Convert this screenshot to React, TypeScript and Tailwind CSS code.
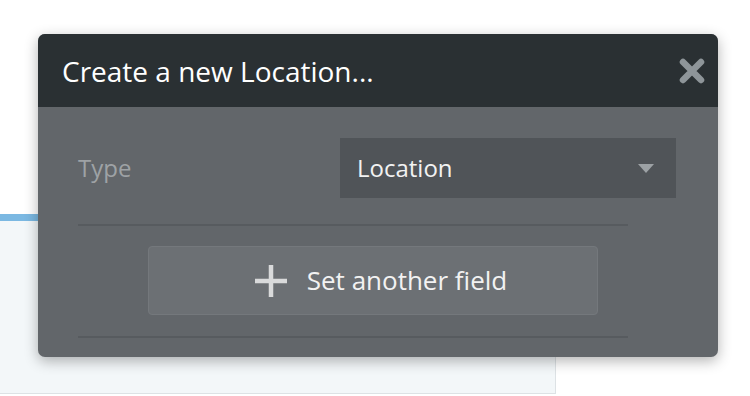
function CloseIcon() {
  return (
    <svg width="26" height="26" viewBox="0 0 26 26" className="block">
      <path
        d="M4 4 L22 22 M22 4 L4 22"
        stroke="#8e9599"
        strokeWidth="6.5"
        strokeLinecap="round"
      />
    </svg>
  );
}

function PlusIcon() {
  return (
    <svg width="36" height="36" viewBox="0 0 36 36" className="block">
      <path d="M18 2 V34 M2 18 H34" stroke="#d9dadb" strokeWidth="4.5" />
    </svg>
  );
}

export default function App() {
  return (
    <div className="relative w-[750px] h-[396px] bg-white overflow-hidden font-['Open_Sans',sans-serif]">
      {/* page behind the popup */}
      <div className="pt-[214px]">
        <div className="w-[556px] h-[180px] bg-[#f3f7f9] border-r border-b border-[#dde2e5]">
          <div className="h-[7px] bg-[#7bb8e2]" />
        </div>
      </div>

      {/* popup */}
      <div className="absolute left-[38px] top-[34px] w-[680px] h-[323px] rounded-[7px] overflow-hidden bg-[#62666a] shadow-[0_4px_14px_rgba(0,0,0,0.3)]">
        <div className="h-[73px] bg-[#2a3033] flex items-center justify-between pl-[24px] pr-[13px]">
          <span className="text-[28px] text-white leading-none">Create a new Location...</span>
          <CloseIcon />
        </div>

        <div className="px-[40px] pt-[31px]">
          <div className="flex items-center">
            <span className="w-[262px] text-[24px] text-[#9ea2a5]">Type</span>
            <div className="w-[336px] h-[60px] bg-[#505458] flex items-center justify-between pl-[17px] pr-[22px]">
              <span className="text-[24px] text-[#f2f2f2]">Location</span>
              <svg width="16" height="9" viewBox="0 0 16 9">
                <path d="M0 0 H16 L8 9 Z" fill="#9da2a5" />
              </svg>
            </div>
          </div>

          <div className="w-[550px] h-[2px] bg-[#575b5f] mt-[26px]" />

          <div className="flex pl-[70px] mt-[20px]">
            <div className="w-[450px] h-[69px] bg-[#6c7074] border border-[#74787c] rounded-[4px] flex items-center justify-center gap-[18px] pl-[14px]">
              <PlusIcon />
              <span className="text-[26px] text-[#f2f2f2]">Set another field</span>
            </div>
          </div>

          <div className="w-[550px] h-[2px] bg-[#575b5f] mt-[21px]" />
        </div>
      </div>
    </div>
  );
}
